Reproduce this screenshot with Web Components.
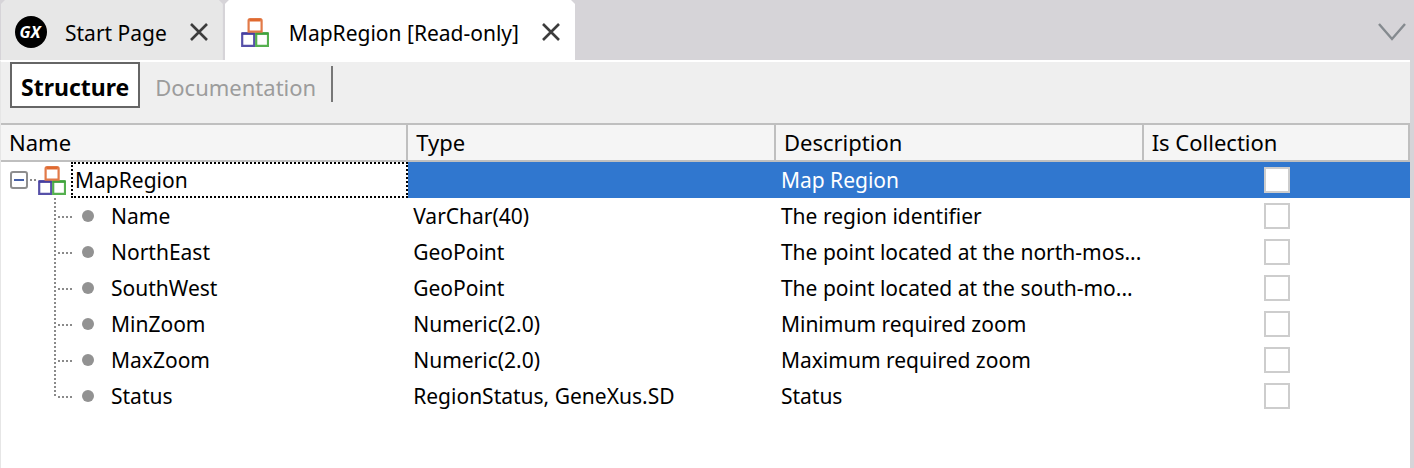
<!DOCTYPE html>
<html lang="en">
<head>
<meta charset="utf-8">
<title>MapRegion</title>
<style>
html, body { height: 100%; }
body { margin: 0; background: #fff; color: #000; font: 21px/28px "Noto Sans", "Open Sans", sans-serif; }
</style>
</head>
<body>
<app-window>
  <tab-strip slot="tabs">
    <doc-tab><gx-logo slot="icon"></gx-logo>Start Page</doc-tab>
    <doc-tab active><blocks-icon slot="icon"></blocks-icon>MapRegion [Read-only]</doc-tab>
  </tab-strip>
  <part-bar slot="parts">
    <part-button active>Structure</part-button>
    <part-button>Documentation</part-button>
  </part-bar>
  <structure-grid></structure-grid>
</app-window>

<script>
const define = (name, html) => {
  const template = document.createElement('template');
  template.innerHTML = html;
  customElements.define(name, class extends HTMLElement {
    constructor() {
      super();
      this.attachShadow({ mode: 'open' }).append(template.content.cloneNode(true));
    }
  });
};

define('gx-logo', `
<style>
  :host { display: block; width: 32px; height: 32px; }
  svg { display: block; }
  text { font: italic bold 16px "Noto Sans", sans-serif; fill: #fff; }
</style>
<svg width="32" height="32" viewBox="0 0 32 32">
  <circle cx="16" cy="16" r="16" fill="#000"/>
  <text x="15" y="22" text-anchor="middle">GX</text>
</svg>`);

define('blocks-icon', `
<style>
  :host { display: block; width: 28px; height: 30px; }
  svg { display: block; }
</style>
<svg width="28" height="30" viewBox="0 0 28 30" fill="#fff" stroke-width="2.2">
  <path d="M1.200 16.500h12v12.300h-12z" stroke="#5650a8"/>
  <path d="M0.800 16.500h12.800" stroke="#463fa0" stroke-width="2.600"/>
  <path d="M15.200 16.500h11.800v12.300h-11.800z" stroke="#55b04f"/>
  <path d="M14.400 16.500h13" stroke="#3fa23c" stroke-width="2.600"/>
  <path d="M7.600 14.600V3.500q0-1.500 1.500-1.500h10q1.500 0 1.500 1.500v11.100z" stroke="#e27a48"/>
  <path d="M8.500 3.200h11.200" stroke="#e0692f" stroke-width="2.600"/>
</svg>`);

define('doc-tab', `
<style>
  :host { display: flex; align-items: center; height: 60px; padding: 6px 15px 2px 14px; box-sizing: border-box;
    background: #e7e7e7; clip-path: polygon(0 4px, 4px 0, calc(100% - 4px) 0, 100% 4px, 100% 100%, 0 100%); }
  :host([active]) { background: #fff; }
  button { font: inherit; color: inherit; background: none; border: 0; margin: 0; padding: 0; }
  .select { display: flex; align-items: center; gap: 18px; white-space: nowrap; }
  .icon { display: grid; place-items: center; width: 32px; height: 32px; }
  .label { padding-top: 2px; }
  .close { display: flex; margin-left: 23px; }
</style>
<button class="select" type="button"><span class="icon"><slot name="icon"></slot></span><span class="label"><slot></slot></span></button>
<button class="close" type="button" aria-label="Close tab">
  <svg width="18" height="18" viewBox="0 0 18 18" fill="none" stroke="#3c3c3c" stroke-width="2.6"><path d="M1 1l16 16M17 1L1 17"/></svg>
</button>`);

define('tab-strip', `
<style>
  :host { display: flex; justify-content: space-between; align-items: center; background: #d6d4d8; padding-left: 1px; }
  .tabs { display: flex; gap: 2px; }
  button { display: flex; background: none; border: 0; margin: 0; padding: 4px 7px 0 0; }
</style>
<div class="tabs"><slot></slot></div>
<button type="button" aria-label="Open tab list">
  <svg width="30" height="20" viewBox="0 0 30 20" fill="none" stroke="#858a8f" stroke-width="2.4"><path d="M2 2l13 15L28 2"/></svg>
</button>`);

define('part-button', `
<style>
  :host { display: block; }
  button { font: 22px/30px "Noto Sans", "Open Sans", sans-serif; color: #9c9c9c; background: none;
    border: 2px solid transparent; margin: 0; padding: 8px 9px 4px; height: 46px; border-radius: 0; }
  :host([active]) button { font-weight: bold; font-size: 23px; color: #000; background: #fff; border-color: #666; }
</style>
<button type="button"><slot></slot></button>`);

define('part-bar', `
<style>
  :host { display: flex; align-items: flex-start; gap: 4px; height: 61px; box-sizing: border-box; padding-left: 9px; background: #efefef; }
  .rule { width: 2px; height: 36px; margin-top: 4px; background: #777; }
</style>
<slot></slot><span class="rule"></span>`);

define('app-window', `
<style>
  :host { display: flex; flex-direction: column; min-height: 100vh; background: #d6d4d8; }
  .body { flex: 1; margin-right: 4px; border-top: 2px solid #fff; border-left: 1px solid #e6e6e6; background: #fff; }
</style>
<slot name="tabs"></slot>
<div class="body"><slot name="parts"></slot><slot></slot></div>`);

const rows = [
  ['Name', 'VarChar(40)', 'The region identifier'],
  ['NorthEast', 'GeoPoint', 'The point located at the north-mos...'],
  ['SouthWest', 'GeoPoint', 'The point located at the south-mo...'],
  ['MinZoom', 'Numeric(2.0)', 'Minimum required zoom'],
  ['MaxZoom', 'Numeric(2.0)', 'Maximum required zoom'],
  ['Status', 'RegionStatus, GeneXus.SD', 'Status'],
];

const guide = last => `
<svg width="94" height="36" viewBox="0 0 94 36" fill="none" stroke="#8a8a8a" stroke-width="2">
  <path d="M54 0v${last ? 20 : 36}" stroke-dasharray="2 2"/><path d="M57 19h16" stroke-dasharray="2 2"/>
  <circle cx="87" cy="18" r="6" fill="#929292" stroke="none"/>
</svg>`;

define('structure-grid', `
<style>
  :host { display: block; }
  table { width: 100%; table-layout: fixed; border-collapse: separate; border-spacing: 0; }
  .name { width: 28.9%; } .type, .desc { width: 26.1%; }
  th { height: 39px; box-sizing: border-box; padding: 0 8px 2px; text-align: left; font-size: 22px; font-weight: normal; background: #f5f5f5;
    border: solid #bfbfbf; border-width: 2px 2px 2px 0; white-space: nowrap; }
  td { height: 36px; padding: 0 0 0 5px; white-space: nowrap; overflow: hidden; }
  td:first-child { padding: 0; }
  td:last-child { padding: 0; text-align: center; }
  .cell { display: flex; align-items: center; height: 36px; }
  .member svg { display: block; margin-right: 16px; }
  .root td:not(:first-child) { background: #3077cf; color: #fff; }
  .toggle { width: 18px; height: 18px; box-sizing: border-box; display: grid; place-items: center; margin-left: 9px; padding: 0;
    background: #fff; border: 2px solid #8e8e8e; border-radius: 3px; }
  .toggle i { width: 10px; height: 2px; background: #4660a8; }
  .link { width: 6px; height: 0; margin: 0 2px; border-top: 2px dotted #8a8a8a; }
  .focus { flex: 1; height: 36px; box-sizing: border-box; margin-left: 5px; padding-left: 2px; line-height: 32px; border: 2px dotted #000; }
  input { appearance: none; display: block; width: 26px; height: 26px; box-sizing: border-box; margin: 0 auto; background: #fff; border: 2px solid #cdcdcd; }
</style>
<table>
  <thead><tr><th class="name">Name</th><th class="type">Type</th><th class="desc">Description</th><th>Is Collection</th></tr></thead>
  <tbody>
    <tr class="root">
      <td><div class="cell"><button class="toggle" type="button" aria-label="Collapse MapRegion"><i></i></button><span class="link"></span><blocks-icon></blocks-icon><span class="focus">MapRegion</span></div></td>
      <td></td><td>Map Region</td><td><input type="checkbox" aria-label="MapRegion is collection"></td>
    </tr>
    ${rows.map(([name, type, desc], i) => `<tr>
      <td><div class="cell member">${guide(i === rows.length - 1)}<span>${name}</span></div></td>
      <td>${type}</td><td>${desc}</td><td><input type="checkbox" aria-label="${name} is collection"></td></tr>`).join('')}
  </tbody>
</table>`);
</script>
</body>
</html>
